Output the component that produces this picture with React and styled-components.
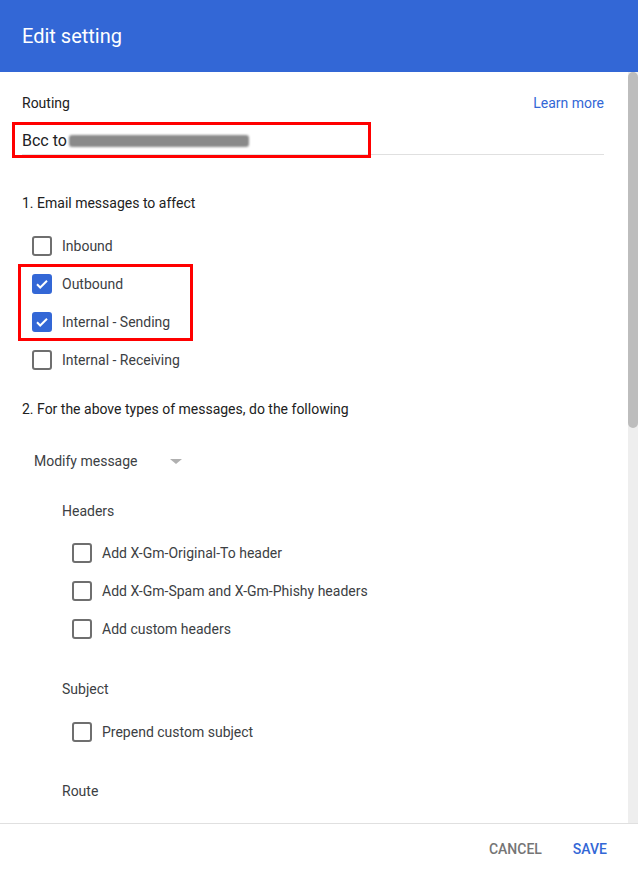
import React from "react";
import styled, { createGlobalStyle } from "styled-components";

const GlobalStyle = createGlobalStyle`
  html, body {
    margin: 0;
    padding: 0;
    background: #fff;
  }
  body {
    font-family: Roboto, "Liberation Sans", Arial, sans-serif;
  }
`;

const Dialog = styled.div`
  width: 638px;
  height: 874px;
  display: flex;
  flex-direction: column;
  background: #fff;
  overflow: hidden;
`;

const Header = styled.header`
  height: 72px;
  flex: none;
  background: #3367d6;
  display: flex;
  align-items: center;
  padding: 0 22px;
  box-sizing: border-box;
`;

const Title = styled.h1`
  margin: 0;
  font-size: 20px;
  font-weight: 400;
  color: #fff;
`;

const Body = styled.div`
  flex: 1;
  display: flex;
  min-height: 0;
`;

const Content = styled.div`
  flex: 1;
  padding: 23px 24px 0 22px;
  overflow: hidden;
  color: #212121;
  font-size: 14px;
`;

const Scrollbar = styled.div`
  width: 10px;
  flex: none;
  background: #eeeeee;
  display: flex;
  flex-direction: column;
`;

const Thumb = styled.div`
  height: 356px;
  background: #bdbdbd;
  border-radius: 5px;
`;

const RoutingRow = styled.div`
  display: flex;
  justify-content: space-between;
  line-height: 16px;
`;

const Link = styled.a`
  color: #3367d6;
  text-decoration: none;
`;

const InputWrap = styled.div`
  position: relative;
  margin-top: 20px;
  padding-bottom: 3px;
  border-bottom: 1px solid #e0e0e0;
  font-size: 16px;
  line-height: 20px;
  color: #202124;
  display: flex;
  align-items: center;
`;

const Redacted = styled.span`
  display: inline-block;
  width: 180px;
  height: 12px;
  margin-left: 2px;
  background: #8a8a8a;
  border-radius: 3px;
  filter: blur(1px);
`;

const Highlight = styled.div`
  position: absolute;
  border: 3px solid #ff0000;
  box-sizing: border-box;
  pointer-events: none;
`;

const SectionTitle = styled.div`
  margin-top: ${(p) => p.$mt}px;
  line-height: 20px;
`;

const CheckList = styled.div`
  margin-top: ${(p) => p.$mt}px;
  padding-left: ${(p) => p.$indent}px;
`;

const Group = styled.div`
  position: relative;
`;

const Row = styled.label`
  height: 38px;
  display: flex;
  align-items: center;
  gap: 10px;
  color: #3c4043;
  line-height: 20px;
`;

const Box = styled.span`
  width: 20px;
  height: 20px;
  box-sizing: border-box;
  border-radius: 3px;
  border: 2px solid ${(p) => (p.$checked ? "#3367d6" : "#6f6f6f")};
  background: ${(p) => (p.$checked ? "#3367d6" : "#fff")};
  display: flex;
  align-items: center;
  justify-content: center;
  flex: none;
`;

const Dropdown = styled.div`
  margin-top: 32px;
  margin-left: 12px;
  display: flex;
  align-items: center;
  line-height: 20px;
  color: #3c4043;
`;

const Caret = styled.span`
  margin-left: 32px;
  width: 0;
  height: 0;
  border-left: 6px solid transparent;
  border-right: 6px solid transparent;
  border-top: 5px solid #b0b0b0;
`;

const SubHeading = styled.div`
  margin-top: ${(p) => p.$mt}px;
  margin-left: 40px;
  line-height: 20px;
  color: #3c4043;
`;

const Footer = styled.footer`
  height: 51px;
  flex: none;
  border-top: 1px solid #e0e0e0;
  box-sizing: border-box;
  display: flex;
  align-items: center;
  justify-content: flex-end;
  gap: 31px;
  padding-right: 31px;
`;

const TextButton = styled.button`
  background: none;
  border: none;
  padding: 0;
  font-family: inherit;
  font-size: 14px;
  font-weight: 500;
  text-transform: uppercase;
  color: ${(p) => (p.$primary ? "#3367d6" : "#757575")};
  cursor: pointer;
`;

const Check = ({ checked, children }) => (
  <Row>
    <Box $checked={checked}>
      {checked && (
        <svg width="16" height="16" viewBox="0 0 16 16">
          <path d="M3 8.3l3.2 3.2 6.8-6.8" fill="none" stroke="#fff" strokeWidth="2" />
        </svg>
      )}
    </Box>
    {children}
  </Row>
);

const App = () => (
  <Dialog>
    <GlobalStyle />
    <Header>
      <Title>Edit setting</Title>
    </Header>
    <Body>
      <Content>
        <RoutingRow>
          <span>Routing</span>
          <Link href="#">Learn more</Link>
        </RoutingRow>
        <InputWrap>
          Bcc to
          <Redacted />
          <Highlight style={{ left: -10, top: -9, width: 359, height: 36 }} />
        </InputWrap>

        <SectionTitle $mt={38}>1. Email messages to affect</SectionTitle>
        <CheckList $mt={14} $indent={10}>
          <Check>Inbound</Check>
          <Group>
            <Check checked>Outbound</Check>
            <Check checked>Internal - Sending</Check>
            <Highlight style={{ left: -14, top: -1, width: 175, height: 77 }} />
          </Group>
          <Check>Internal - Receiving</Check>
        </CheckList>

        <SectionTitle $mt={20}>2. For the above types of messages, do the following</SectionTitle>
        <Dropdown>
          Modify message
          <Caret />
        </Dropdown>

        <SubHeading $mt={30}>Headers</SubHeading>
        <CheckList $mt={13} $indent={50}>
          <Check>Add X-Gm-Original-To header</Check>
          <Check>Add X-Gm-Spam and X-Gm-Phishy headers</Check>
          <Check>Add custom headers</Check>
        </CheckList>

        <SubHeading $mt={31}>Subject</SubHeading>
        <CheckList $mt={14} $indent={50}>
          <Check>Prepend custom subject</Check>
        </CheckList>

        <SubHeading $mt={30}>Route</SubHeading>
      </Content>
      <Scrollbar>
        <Thumb />
      </Scrollbar>
    </Body>
    <Footer>
      <TextButton>Cancel</TextButton>
      <TextButton $primary>Save</TextButton>
    </Footer>
  </Dialog>
);

export default App;
